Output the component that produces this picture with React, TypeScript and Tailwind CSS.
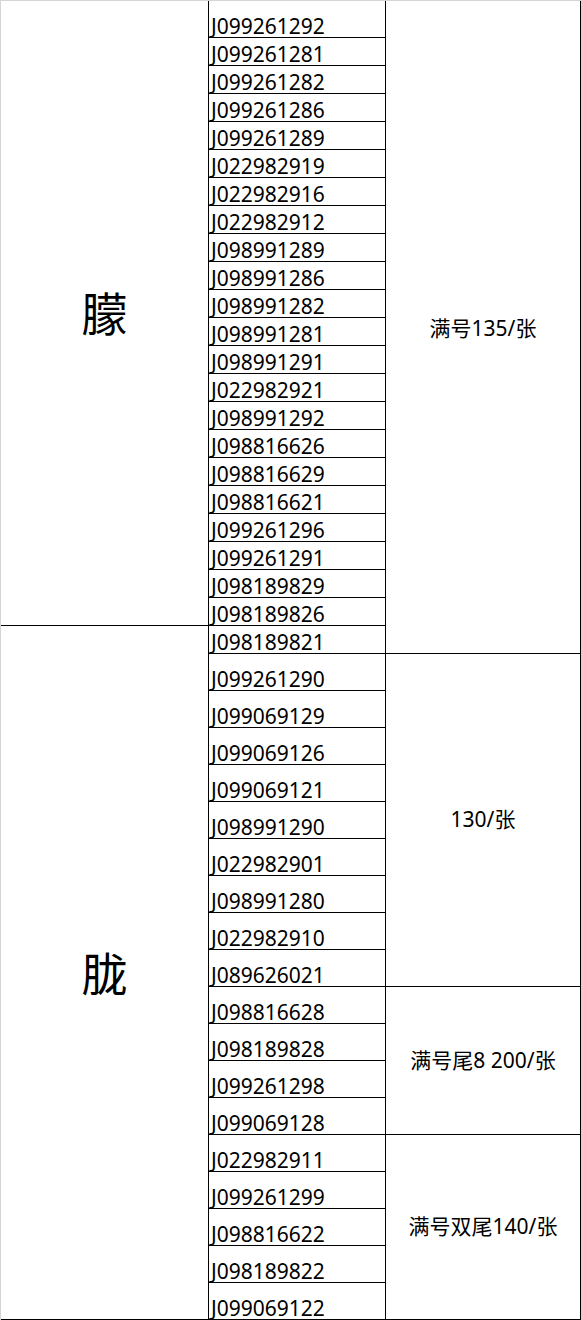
const group1 = [
  "J099261292",
  "J099261281",
  "J099261282",
  "J099261286",
  "J099261289",
  "J022982919",
  "J022982916",
  "J022982912",
  "J098991289",
  "J098991286",
  "J098991282",
  "J098991281",
  "J098991291",
  "J022982921",
  "J098991292",
  "J098816626",
  "J098816629",
  "J098816621",
  "J099261296",
  "J099261291",
  "J098189829",
  "J098189826",
  "J098189821",
];

const group2 = [
  "J099261290",
  "J099069129",
  "J099069126",
  "J099069121",
  "J098991290",
  "J022982901",
  "J098991280",
  "J022982910",
  "J089626021",
  "J098816628",
  "J098189828",
  "J099261298",
  "J099069128",
  "J022982911",
  "J099261299",
  "J098816622",
  "J098189822",
  "J099069122",
];

const font = { fontFamily: '"Noto Sans", "Noto Sans CJK SC", sans-serif' };

export default function App() {
  return (
    <div className="w-[581px] h-[1320px] bg-white" style={font}>
      <div className="grid grid-flow-col grid-cols-[207px_176px_194px] grid-rows-[36px_repeat(22,27px)_repeat(18,36px)] gap-px bg-black border-t border-l border-[#d4d4d4] pr-px pb-px text-black">
        {/* first column: big names */}
        <div className="row-span-22 bg-white flex items-center justify-center text-[46px] leading-none">
          朦
        </div>
        <div className="row-span-19 bg-white flex items-center justify-center text-[46px] leading-none">
          胧
        </div>

        {/* numbers */}
        {[...group1, ...group2].map((n) => (
          <div key={n} className="bg-white flex items-end pl-[2px] pb-[1.5px] text-[21px] leading-[20px]">
            {n}
          </div>
        ))}

        {/* prices */}
        <div className="row-span-23 bg-white flex items-center justify-center text-[21px] pt-[3px]">
          满号135/张
        </div>
        <div className="row-span-9 bg-white flex items-center justify-center text-[21px]">
          130/张
        </div>
        <div className="row-span-4 bg-white flex items-center justify-center text-[21px]">
          满号尾8 200/张
        </div>
        <div className="row-span-5 bg-white flex items-center justify-center text-[21px]">
          满号双尾140/张
        </div>
      </div>
    </div>
  );
}
